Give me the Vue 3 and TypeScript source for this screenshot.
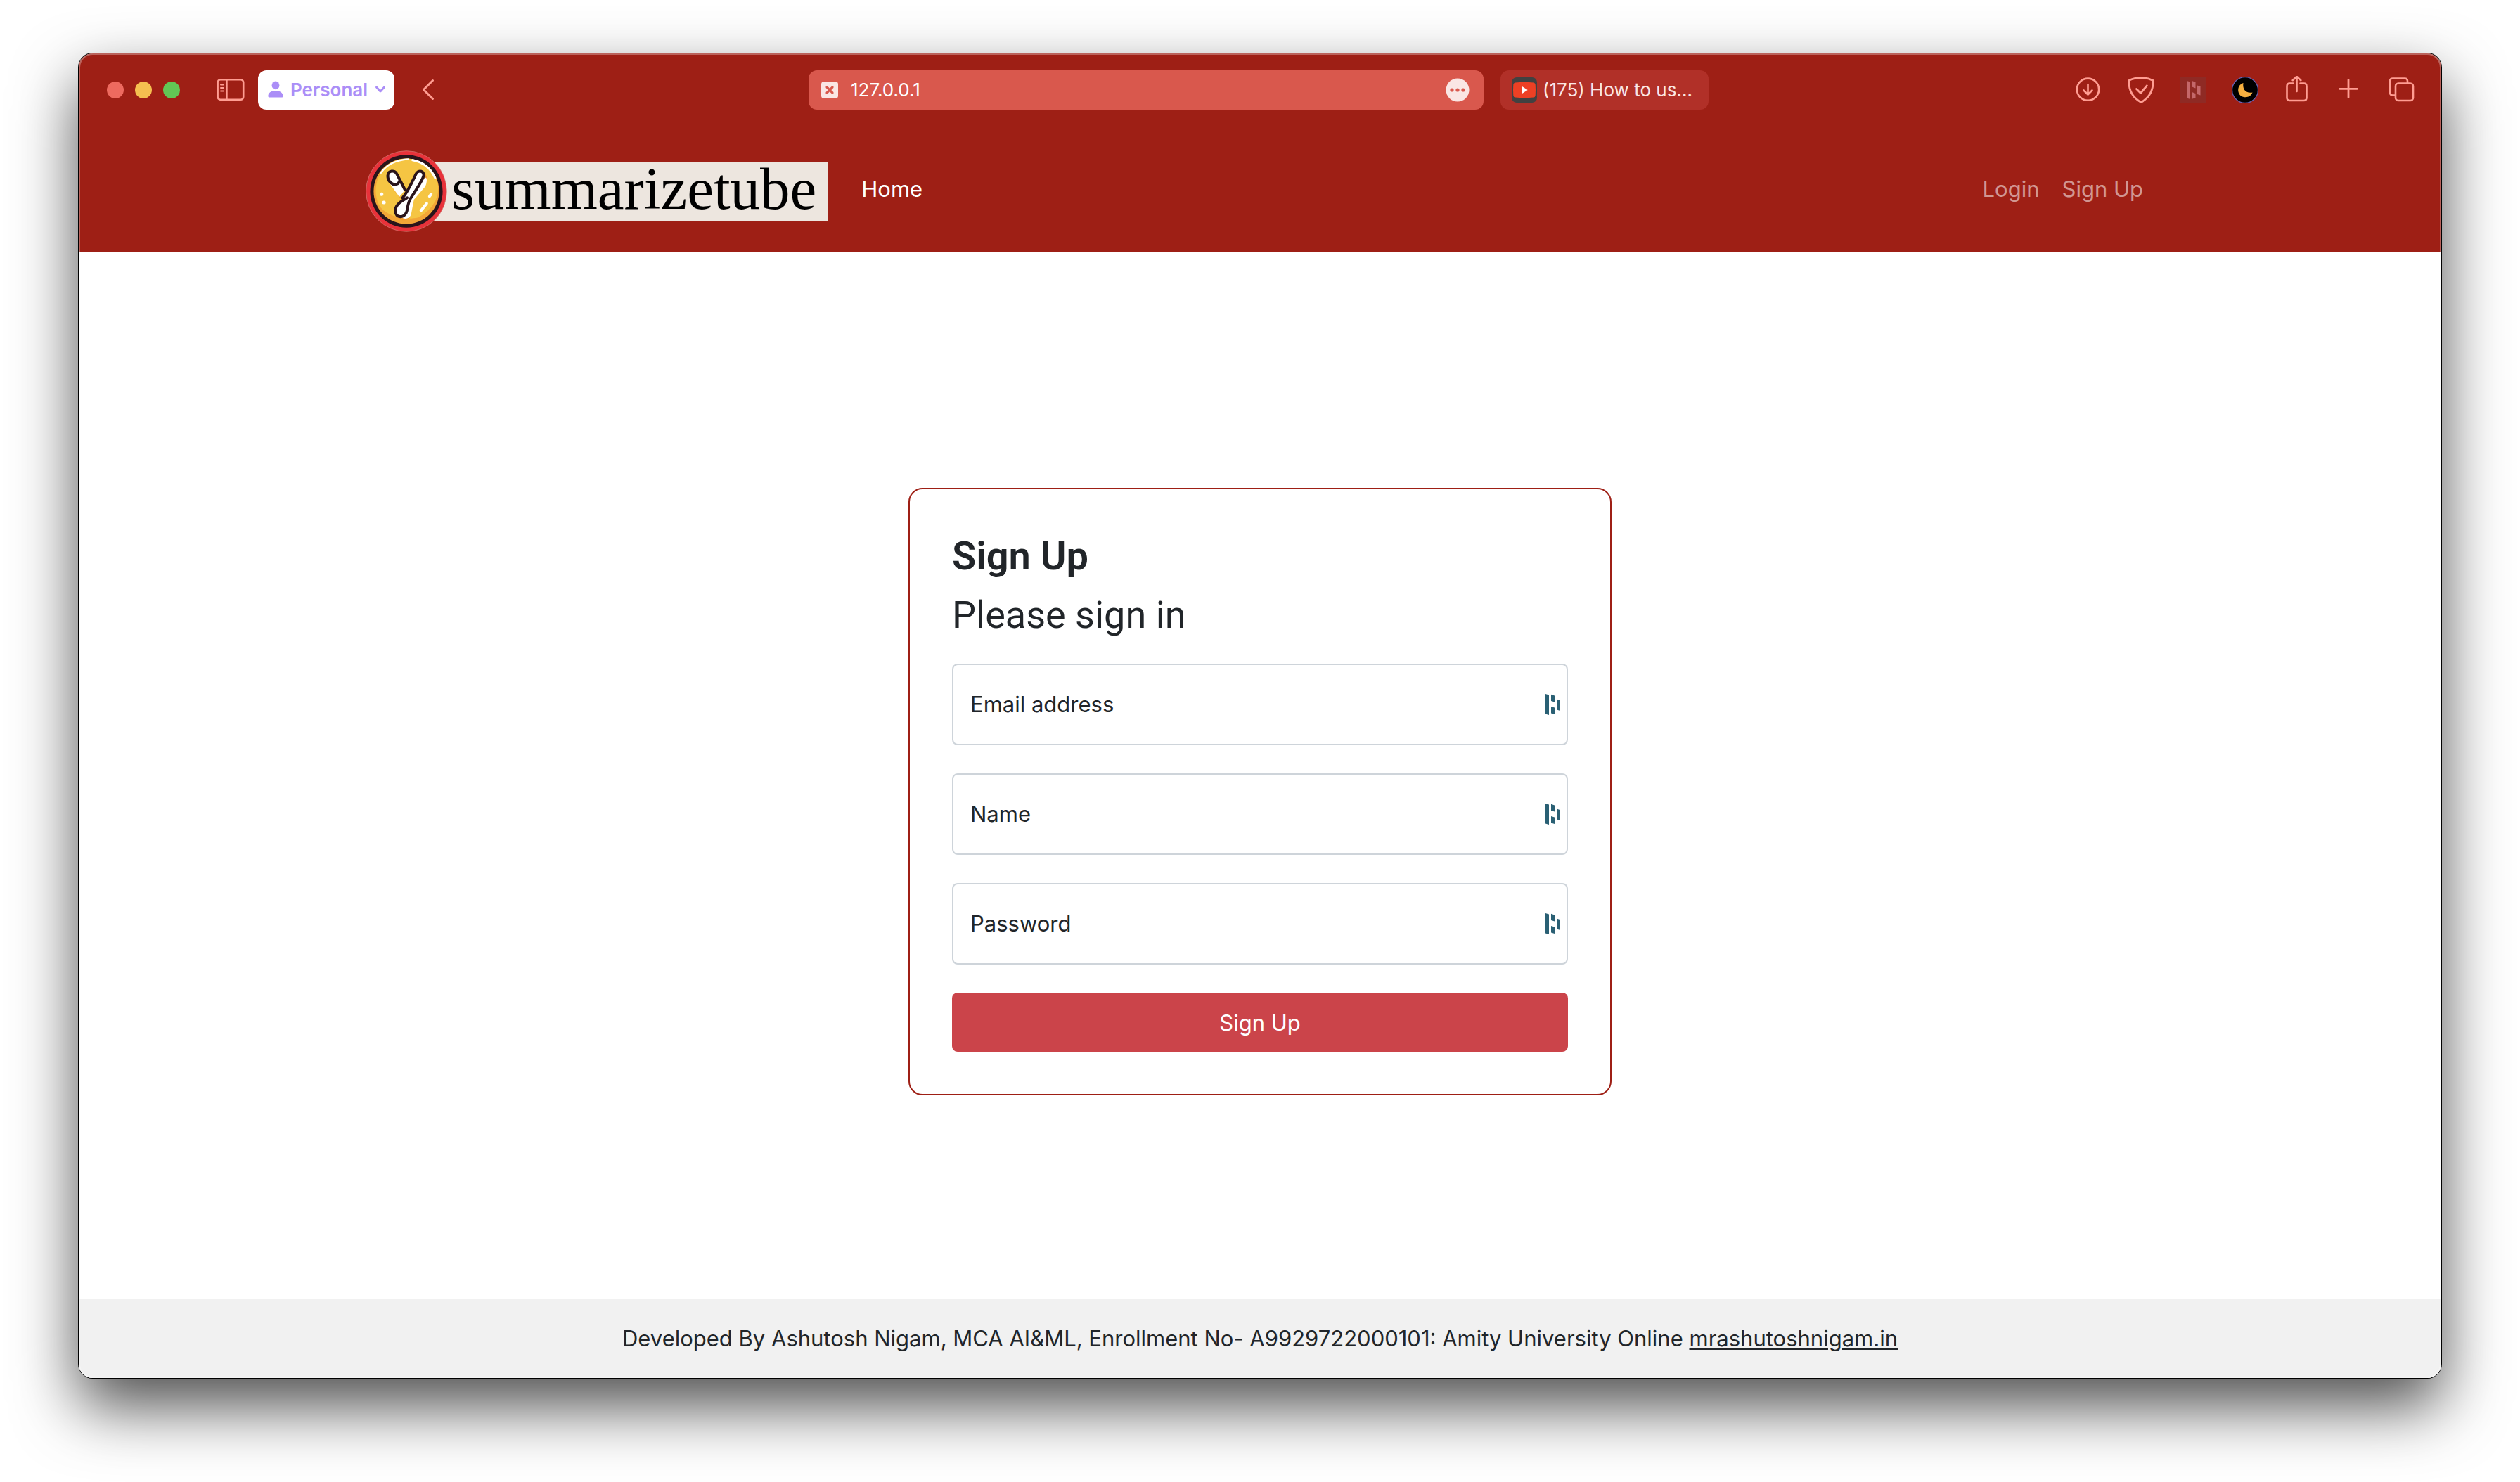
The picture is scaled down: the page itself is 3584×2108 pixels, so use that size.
<script setup lang="ts">
import { reactive } from 'vue'

interface Field {
  id: 'email' | 'name' | 'password'
  label: string
  type: string
}

const fields: Field[] = [
  { id: 'email', label: 'Email address', type: 'email' },
  { id: 'name', label: 'Name', type: 'text' },
  { id: 'password', label: 'Password', type: 'password' },
]

const form = reactive({ email: '', name: '', password: '' })
</script>

<template>
  <div class="desktop">
    <div class="window">
      <div class="toolbar">
        <div class="tools-left">
          <div class="lights">
            <button class="light red" type="button" aria-label="Close"></button>
            <button class="light yellow" type="button" aria-label="Minimise"></button>
            <button class="light green" type="button" aria-label="Zoom"></button>
          </div>
          <button class="tool" type="button" aria-label="Sidebar">
            <svg width="40" height="40" viewBox="0 0 40 40" fill="none" stroke="#ff9d92" stroke-width="2.6" stroke-linecap="round">
              <rect x="1.6" y="5.3" width="36.6" height="28.4" rx="4" />
              <path d="M14.6 5.5v28" stroke-width="2.2" />
              <path d="M6 12.6h4M6 17h4M6 21.4h4" stroke-width="2" />
            </svg>
          </button>
          <button class="profile" type="button">
            <svg width="22" height="24" viewBox="0 0 22 24" fill="#ab8ef7">
              <ellipse cx="11" cy="6.4" rx="5.4" ry="5.9" />
              <path d="M.4 21.5C.4 17 4.8 14 11 14s10.600 3 10.600 7.500c0 1.400-.7 2-2 2H2.400c-1.300 0-2-.6-2-2z" />
            </svg>
            <span>Personal</span>
            <svg width="16" height="12" viewBox="0 0 16 12" fill="none" stroke="#ab8ef7" stroke-width="3" stroke-linecap="round" stroke-linejoin="round">
              <path d="M2.500 3l5.500 6 5.500-6" />
            </svg>
          </button>
          <button class="back" type="button" aria-label="Back">
            <svg width="32" height="32" viewBox="0 0 32 32" fill="none" stroke="#ff9d92" stroke-width="3" stroke-linecap="round" stroke-linejoin="round">
              <path d="M22.500 2.500L9.500 15.500l13 13" />
            </svg>
          </button>
        </div>

        <div class="tabs">
          <div class="tab active">
            <svg width="24" height="24" viewBox="0 0 24 24">
              <rect width="24" height="24" rx="4" fill="#fae6e4" />
              <path d="M8 8l8 8M16 8l-8 8" stroke="#d9584d" stroke-width="3.200" stroke-linecap="round" />
            </svg>
            <span class="address">127.0.0.1</span>
            <button class="more" type="button" aria-label="Page menu">
              <svg width="34" height="34" viewBox="0 0 34 34">
                <circle cx="17" cy="17" r="16.500" fill="#fae6e4" />
                <g fill="#d9584d">
                  <circle cx="9" cy="17" r="2.600" />
                  <circle cx="17" cy="17" r="2.600" />
                  <circle cx="25" cy="17" r="2.600" />
                </g>
              </svg>
            </button>
          </div>
          <div class="tab other">
            <svg width="36" height="36" viewBox="0 0 36 36">
              <rect width="36" height="36" rx="7" fill="#414141" />
              <path d="M5 7.500Q18 6 31 7.500q2.500.5 2.700 3 .6 7.500 0 15-.2 2.500-2.700 3-13 1.500-26 0-2.500-.5-2.700-3-.6-7.500 0-15 .2-2.500 2.700-3z" fill="#ed4024" />
              <path d="M14.500 12.800v10.400l8.200-5.200z" fill="#fff" />
            </svg>
            <span class="tab-title">(175) How to us...</span>
          </div>
        </div>

        <div class="tools-right">
          <button class="tool" type="button" aria-label="Downloads">
            <svg width="40" height="40" viewBox="0 0 40 40" fill="none" stroke="#ff9d92" stroke-width="2.600" stroke-linecap="round" stroke-linejoin="round">
              <circle cx="17.500" cy="19.200" r="15.600" />
              <path d="M17.500 12v14M11.500 20.500l6 6 6-6" />
            </svg>
          </button>
          <button class="tool" type="button" aria-label="Content blocker">
            <svg width="40" height="40" viewBox="0 0 40 40" fill="none" stroke="#ff9d92" stroke-width="2.800" stroke-linecap="round" stroke-linejoin="round">
              <path d="M19 2.600c6 0 12.500 1.400 17.200 3.800C36.600 20 31 31 19 37.400 7 31 1.400 20 1.800 6.400 6.500 4 13 2.600 19 2.600z" />
              <path d="M12.500 18.500l6 6 8.800-10.700" />
            </svg>
          </button>
          <button class="tool" type="button" aria-label="Password manager">
            <svg width="40" height="40" viewBox="0 0 40 40">
              <rect x="0" y="1" width="38" height="38" rx="4" fill="#8f2a24" />
              <g fill="#c4686a">
                <path d="M10 7l5 1.500V33l-5-1.500z" />
                <path d="M17.500 7l5 2v8.500l-5-2z" />
                <path d="M17.500 23l5 2v6l-5 1.800z" />
                <path d="M25 13.500l4.500 1.500v12.500L25 26z" />
              </g>
            </svg>
          </button>
          <button class="tool" type="button" aria-label="Dark mode">
            <svg width="40" height="40" viewBox="0 0 40 40">
              <circle cx="19" cy="20" r="18.400" fill="#000" stroke="#6b63b5" stroke-width="1.200" />
              <path d="M16.500 10C6.500 13 7 28 17 30c6 1 10.500-1.500 12.500-6.500-9.500 1.500-14.500-4.500-13-13.500z" fill="#f6b040" />
            </svg>
          </button>
          <button class="tool" type="button" aria-label="Share">
            <svg width="40" height="40" viewBox="0 0 40 40" fill="none" stroke="#ff9d92" stroke-width="2.600" stroke-linecap="round" stroke-linejoin="round">
              <path d="M13.500 10.500H8.500q-4 0-4 4V31q0 4 4 4h20q4 0 4-4V14.500q0-4-4-4h-5" />
              <path d="M18.500 22V1M12.700 6.200L18.500.8l5.800 5.400" />
            </svg>
          </button>
          <button class="tool" type="button" aria-label="New tab">
            <svg width="40" height="40" viewBox="0 0 40 40" fill="none" stroke="#ff9d92" stroke-width="2.800" stroke-linecap="round">
              <path d="M18 5.500v25M5.500 18.300h25" />
            </svg>
          </button>
          <button class="tool" type="button" aria-label="Tab overview">
            <svg width="40" height="40" viewBox="0 0 40 40" fill="none" stroke="#ff9d92" stroke-width="2.600">
              <rect x="11" y="10.500" width="25" height="24.500" rx="4" />
              <path d="M11 27.500H7q-4 0-4-4V7.500q0-4 4-4h17q4 0 4 4v3" />
            </svg>
          </button>
        </div>
      </div>

      <nav class="navbar">
        <a class="brand" href="#">
          <svg class="badge" width="116" height="116" viewBox="31 43 346 346">
            <circle cx="204" cy="216" r="171" fill="#e8323a" stroke="#cf7f78" stroke-width="2" />
            <circle cx="204" cy="216" r="154" fill="#2a141b" />
            <circle cx="204" cy="216" r="139" fill="#f2a637" />
            <path d="M204 77c72 0 135 58 135 128 0 52-34 94-84 122-60 14-142-6-168-54C48 190 100 77 204 77z" fill="#f5c543" />
            <path d="M96 138c22-32 60-54 116-58" fill="none" stroke="#fff" stroke-width="7" stroke-linecap="round" />
            <path d="M230 84c44 8 78 36 96 76" fill="none" stroke="#fff" stroke-width="9" stroke-linecap="round" />
            <path d="M144 204l42 50 20-34 66-76c22-10 24 30 12 46l-52 68-12 64c-8 22-38 20-46 10l14-82z" fill="#f39a2d" />
            <path d="M128 176l46 64 22-26-26-46zM214 252l66-90c12-14 14 14 4 34l-48 56-12 62c-6 22-34 24-42 8z" fill="#fff" />
            <g fill="#fff" stroke="#2a141b" stroke-width="12" stroke-linecap="round" stroke-linejoin="round">
              <path d="M198 210l-34-66c-10-20-38-16-39 6-1 24 20 42 38 36 10-3 12-12 14-18" />
              <path d="M188 244c22-26 42-70 56-100 10-22 40-14 32 10-8 24-34 60-54 92-12 20-12 36-16 54-6 30-50 34-49-2 1-28 28-40 50-54" />
            </g>
            <g fill="none" stroke="#fff" stroke-width="12" stroke-linecap="round">
              <path d="M302 238l7-10M266 298l24-30" />
              <path d="M98 229h1M108 264h1" stroke-width="15" />
            </g>
          </svg>
          <span class="wordmark">summarizetube</span>
        </a>
        <a class="nav-link current" href="#">Home</a>
        <div class="account">
          <a class="nav-link" href="#">Login</a>
          <a class="nav-link" href="#">Sign Up</a>
        </div>
      </nav>

      <main class="content">
        <form class="card" @submit.prevent>
          <h1 class="title">Sign Up</h1>
          <h2 class="subtitle">Please sign in</h2>
          <div v-for="field in fields" :key="field.id" class="field">
            <input :id="field.id" v-model="form[field.id]" :type="field.type" placeholder=" " />
            <label :for="field.id">{{ field.label }}</label>
            <svg class="autofill" width="22" height="30" viewBox="0 0 22 30" fill="#2a6074">
              <path d="M0 0l5 1.500V30l-5-1.500z" />
              <path d="M8 .8l5 1.700v9l-5-1.600z" />
              <path d="M8 18l5 1.600V29l-5-1.400z" />
              <path d="M16 7.500l5 1.700V24l-5-1.600z" />
            </svg>
          </div>
          <button class="submit" type="submit">Sign Up</button>
        </form>
      </main>

      <footer class="footer">
        Developed By Ashutosh Nigam, MCA AI&amp;ML, Enrollment No- A9929722000101: Amity University Online
        <a href="#">mrashutoshnigam.in</a>
      </footer>
    </div>
  </div>
</template>

<style>
body {
  margin: 0;
  background: #fff;
}
</style>

<style scoped>
.desktop {
  box-sizing: border-box;
  display: flex;
  min-height: 100vh;
  padding: 76px 112px 148px;
  overflow: hidden;
  color: #212529;
  font-family: Inter, "Liberation Sans", sans-serif;
  font-size: 31px;
  line-height: 48px;
}

.desktop * {
  box-sizing: border-box;
}

button {
  margin: 0;
  padding: 0;
  border: 0;
  background: none;
  font-family: inherit;
}

svg {
  display: block;
  flex: none;
}

.window {
  position: relative;
  display: flex;
  flex: 1;
  flex-direction: column;
  border-radius: 20px;
  background: #fff;
  box-shadow: 0 0 0 1px #000, 0 40px 90px rgba(0, 0, 0, 0.7);
}

/* Light rim that runs round the inside of the window frame */
.window::after {
  position: absolute;
  inset: 0;
  border-radius: 20px;
  box-shadow: inset 0 0 0 2px rgba(255, 255, 255, 0.3);
  content: "";
  pointer-events: none;
}

.toolbar {
  display: grid;
  grid-template-columns: 1fr minmax(0, 1280px) 1fr;
  align-items: center;
  height: 104px;
  padding-right: 4px;
  border-radius: 20px 20px 0 0;
  background: #9e1f15;
}

.tools-left {
  display: flex;
  align-items: center;
  padding-left: 40px;
}

.lights {
  display: flex;
  gap: 16px;
  margin-right: 52px;
}

.light {
  width: 24px;
  height: 24px;
  border-radius: 50%;
}

.red {
  background: #ed6a5f;
}

.yellow {
  background: #f5bf50;
}

.green {
  background: #62c655;
}

.tool {
  width: 40px;
  height: 40px;
}

.profile {
  display: flex;
  align-items: center;
  gap: 10px;
  height: 56px;
  margin: 0 32px 0 19px;
  padding: 0 12px 2px 14px;
  border-radius: 12px;
  background: #fff;
  color: #ab8ef7;
  font-size: 26px;
  font-weight: 600;
}

.tabs {
  display: flex;
  gap: 24px;
}

.tab {
  display: flex;
  align-items: center;
  height: 56px;
  border-radius: 12px;
  font-size: 26px;
}

.active {
  flex: 1;
  gap: 18px;
  padding: 0 20px 0 18px;
  background: #d9584d;
  color: #fff;
}

.address {
  flex: 1;
}

.other {
  flex: none;
  gap: 8px;
  width: 296px;
  padding-left: 16px;
  background: #b13028;
  color: #fae6e4;
  white-space: nowrap;
}

.tools-right {
  display: flex;
  justify-content: flex-end;
  gap: 34px;
  padding-right: 32px;
}

.navbar {
  display: flex;
  align-items: center;
  height: 178px;
  padding: 6px 408px 0;
  background: #9e1f15;
}

.brand {
  display: flex;
  align-items: center;
  margin-right: 32px;
  color: #000;
  text-decoration: none;
}

.badge {
  position: relative;
  z-index: 1;
}

.wordmark {
  height: 84px;
  margin-left: -36px;
  padding: 0 16px 0 42px;
  background: #ede6df;
  font-family: "Liberation Serif", serif;
  font-size: 85px;
  line-height: 76px;
}

.nav-link {
  padding: 0 16px 6px;
  color: rgba(255, 255, 255, 0.55);
  text-decoration: none;
}

.current {
  color: #fff;
}

.account {
  display: flex;
  margin-left: auto;
}

.content {
  display: flex;
  flex: 1;
  align-items: center;
  justify-content: center;
  padding-top: 46px;
}

.card {
  display: flex;
  flex-direction: column;
  width: 100%;
  max-width: 1000px;
  padding: 62px 60px 60px;
  border: 2px solid #9e1f15;
  border-radius: 20px;
}

.title,
.subtitle {
  margin: 0 0 16px;
  font-family: Roboto, sans-serif;
  font-size: 56px;
  font-weight: 600;
  line-height: 67px;
}

.subtitle {
  margin-bottom: 36px;
  font-size: 54px;
  font-weight: 400;
}

.field {
  position: relative;
  margin-bottom: 40px;
}

.field input {
  display: block;
  width: 100%;
  height: 116px;
  padding: 32px 72px 0 24px;
  border: 2px solid #ced4da;
  border-radius: 8px;
  background: #fff;
  color: #212529;
  font: inherit;
}

.field label {
  position: absolute;
  top: 34px;
  left: 26px;
  pointer-events: none;
}

.field input:focus + label,
.field input:not(:placeholder-shown) + label {
  top: 8px;
  font-size: 26px;
  line-height: 32px;
}

.autofill {
  position: absolute;
  top: 43px;
  right: 10px;
}

.submit {
  height: 84px;
  border-radius: 8px;
  background: #cb444a;
  color: #fff;
  font-size: 31px;
}

.footer {
  padding: 32px;
  border-radius: 0 0 20px 20px;
  background: #f1f1f1;
  text-align: center;
}

.footer a {
  color: inherit;
}
</style>
